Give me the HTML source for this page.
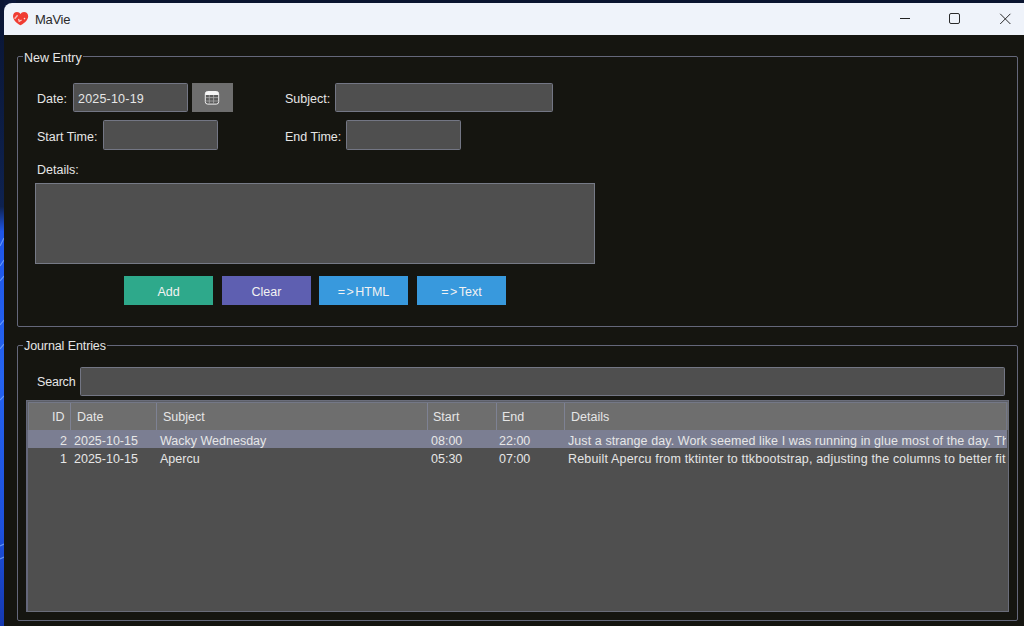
<!DOCTYPE html>
<html><head><meta charset="utf-8">
<style>
*{box-sizing:border-box;margin:0;padding:0}
html,body{width:1024px;height:626px;overflow:hidden;background:#151510;font-family:"Liberation Sans",sans-serif;font-size:12.5px;color:#e6e6e6}
.a{position:absolute}
.t{position:absolute;white-space:pre;line-height:1}
.ent{position:absolute;background:#4f4f4f;border:1px solid #737684;border-radius:1.5px}
.btn{position:absolute;color:#f2f2f2;text-align:center;line-height:29px;padding-top:2px;height:29px;width:89px}
.lf{position:absolute;border:1px solid #64677a;border-radius:2px}
.sep{position:absolute;top:403px;width:1px;height:27px;background:#7e8294}
</style></head><body>
<!-- desktop strips -->
<div class="a" style="left:0;top:0;width:1024px;height:3px;background:#0a1530"></div>
<svg class="a" style="left:0;top:0" width="4" height="626" viewBox="0 0 4 626">
<defs><linearGradient id="lg" x1="0" y1="0" x2="0" y2="1">
<stop offset="0" stop-color="#0a1533"/><stop offset="0.33" stop-color="#0e2250"/><stop offset="0.37" stop-color="#1f56e8"/><stop offset="0.6" stop-color="#2563f0"/><stop offset="0.85" stop-color="#1d50dc"/><stop offset="1" stop-color="#1538b0"/></linearGradient></defs>
<rect width="4" height="626" fill="url(#lg)"/>
<path d="M0 246 L4 238 M0 266 L4 260 M0 281 L4 276 M0 325 L4 320 M0 349 L4 344 M0 400 L4 396 M0 546 L4 544 M0 559 L4 557" stroke="#7fb0ff" stroke-width="1.2" opacity=".7"/>
</svg>
<!-- title bar -->
<div class="a" style="left:4px;top:0;width:12px;height:14px;background:#0b1738"></div>
<div class="a" style="left:4px;top:3px;width:1030px;height:32px;background:#eff3fa;border-top-left-radius:8px"></div>
<svg class="a" style="left:10px;top:9px" width="22" height="19" viewBox="0 0 22 19">
<path d="M10.5 16.2 C8 15 3 11.5 3 7.2 C3 4.6 4.8 3 7 3 C8.6 3 9.8 3.9 10.5 5 C11.2 3.9 12.4 3 14 3 C16.2 3 18.2 4.6 18.2 7.2 C18.2 11.5 13 15 10.5 16.2 Z" fill="#f03c32"/>
<path d="M7.6 6.2 L4.6 9.8" stroke="#f5c0bc" stroke-width="1.4" fill="none"/>
<path d="M8.6 9.8 L9.2 12.4 L11.6 11" stroke="#f7d6d3" stroke-width="1.2" fill="none"/>
<circle cx="14.5" cy="9.6" r="0.8" fill="#f8e0de"/>
</svg>
<div class="t" style="left:35px;top:13px;font-size:13px;letter-spacing:-0.3px;color:#2a2a2a">MaVie</div>
<div class="a" style="left:900px;top:18px;width:10px;height:1px;background:#222"></div>
<div class="a" style="left:949px;top:13px;width:11px;height:11px;border:1px solid #2a2a2a;border-radius:2px"></div>
<svg class="a" style="left:999px;top:12px" width="13" height="13" viewBox="0 0 13 13"><path d="M1.2 1.8 L11.4 12 M11.4 1.8 L1.2 12" stroke="#2a2a2a" stroke-width="1"/></svg>

<!-- New Entry frame -->
<div class="lf" style="left:17px;top:56px;width:1001px;height:271px"></div>
<div class="t" style="left:23px;top:52px;padding:0 1px;background:#151510">New Entry</div>

<div class="t" style="left:37px;top:93px">Date:</div>
<div class="ent" style="left:73px;top:83px;width:115px;height:29px"></div>
<div class="t" style="left:78px;top:93px;letter-spacing:0.2px">2025-10-19</div>
<div class="a" style="left:192px;top:83px;width:41px;height:29px;background:#6e6e6e"></div>
<svg class="a" style="left:204px;top:90px" width="16" height="16" viewBox="0 0 16 16">
<rect x="1.3" y="1.5" width="13.4" height="12.6" rx="2.4" fill="#5c5c5c" stroke="#f0f0f0" stroke-width="1"/>
<path d="M1.3 4.6 V3.9 A2.4 2.4 0 0 1 3.7 1.5 H12.3 A2.4 2.4 0 0 1 14.7 3.9 V4.9 H1.3 Z" fill="#f6f6f6"/>
<path d="M2 7.6h12M2 11h12M5.3 5v8.6M9.6 5v8.6" stroke="#a9a9a9" stroke-width=".8"/>
</svg>

<div class="t" style="left:285px;top:93px">Subject:</div>
<div class="ent" style="left:335px;top:83px;width:218px;height:29px"></div>

<div class="t" style="left:37px;top:131px">Start Time:</div>
<div class="ent" style="left:103px;top:120px;width:115px;height:30px"></div>
<div class="t" style="left:285px;top:131px">End Time:</div>
<div class="ent" style="left:346px;top:120px;width:115px;height:30px"></div>

<div class="t" style="left:37px;top:164px">Details:</div>
<div class="a" style="left:35px;top:183px;width:560px;height:81px;background:#4f4f4f;border:1px solid #767a86"></div>

<div class="btn" style="left:124px;top:276px;background:#2ea98b">Add</div>
<div class="btn" style="left:222px;top:276px;background:#5e5fb1">Clear</div>
<div class="btn" style="left:319px;top:276px;background:#3899dd"><span style="letter-spacing:1.5px">=&gt;</span>HTML</div>
<div class="btn" style="left:417px;top:276px;background:#3899dd"><span style="letter-spacing:1.5px">=&gt;</span>Text</div>

<!-- Journal Entries frame -->
<div class="lf" style="left:17px;top:345px;width:1001px;height:276px"></div>
<div class="t" style="left:23px;top:340px;padding:0 1px;background:#151510;letter-spacing:-0.1px">Journal Entries</div>
<div class="t" style="left:37px;top:376px;letter-spacing:-0.2px">Search</div>
<div class="ent" style="left:80px;top:367px;width:925px;height:29px"></div>

<!-- tree -->
<div class="a" style="left:26px;top:400px;width:983px;height:212px;background:#4f4f4f;border:1px solid #6a6d7a;border-left:2px solid #64677a"></div>
<div class="a" style="left:27px;top:401px;width:981px;height:29px;background:#6e6e6e;border-top:1px solid #5c5e66;border-left:1px solid #5c5e66"></div>
<div class="a" style="left:28px;top:402px;width:979px;height:28px;background:#6e6e6e;border-top:1px solid #747887;border-left:1px solid #747887;border-right:1px solid #747887"></div>
<div class="sep" style="left:70px"></div>
<div class="sep" style="left:156px"></div>
<div class="sep" style="left:427px"></div>
<div class="sep" style="left:496px"></div>
<div class="sep" style="left:564px"></div>
<div class="t" style="left:52px;top:411px">ID</div>
<div class="t" style="left:77px;top:411px">Date</div>
<div class="t" style="left:163px;top:411px">Subject</div>
<div class="t" style="left:433px;top:411px">Start</div>
<div class="t" style="left:502px;top:411px">End</div>
<div class="t" style="left:571px;top:411px">Details</div>

<div class="a" style="left:28px;top:430px;width:979px;height:18px;background:#7b7e92"></div>
<div class="a" style="left:28px;top:430px;width:979px;height:36px;overflow:hidden">
  <div class="t" style="left:32px;top:5px">2</div>
  <div class="t" style="left:46px;top:5px">2025-10-15</div>
  <div class="t" style="left:132px;top:5px">Wacky Wednesday</div>
  <div class="t" style="left:403px;top:5px">08:00</div>
  <div class="t" style="left:471px;top:5px">22:00</div>
  <div class="t" style="left:540px;top:5px;width:438px;overflow:hidden;letter-spacing:0.08px">Just a strange day. Work seemed like I was running in glue most of the day. That</div>
  <div class="t" style="left:32px;top:23px">1</div>
  <div class="t" style="left:46px;top:23px">2025-10-15</div>
  <div class="t" style="left:132px;top:23px">Apercu</div>
  <div class="t" style="left:403px;top:23px">05:30</div>
  <div class="t" style="left:471px;top:23px">07:00</div>
  <div class="t" style="left:540px;top:23px;width:438px;overflow:hidden;letter-spacing:0.17px">Rebuilt Apercu from tktinter to ttkbootstrap, adjusting the columns to better fit</div>
</div>
</body></html>
